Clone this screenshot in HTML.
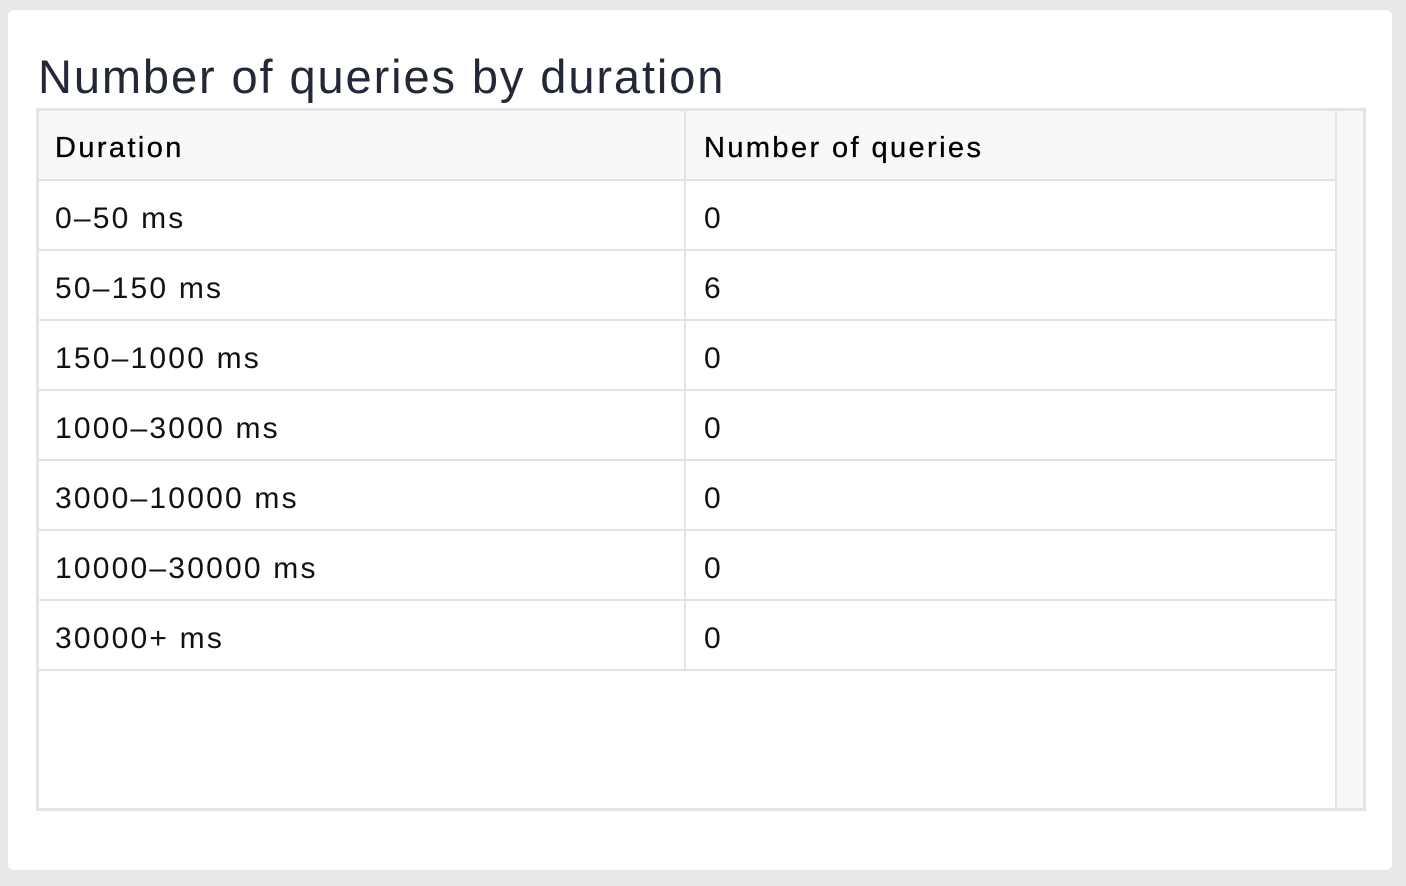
<!DOCTYPE html>
<html><head><style>
body{margin:0;width:1406px;height:886px;background:#e8e8e8;font-family:"Liberation Sans",sans-serif;overflow:hidden}
.card{position:absolute;left:8px;top:10px;width:1384px;height:860px;background:#fff;border-radius:6px}
h1{position:absolute;left:38px;top:50px;margin:0;font-weight:400;font-size:47px;letter-spacing:1.9px;color:#222838;line-height:54px}
.tbl{position:absolute;left:36px;top:108px;width:1324px;height:697px;border:3px solid #e2e4e7;background:#fff}
.scr{position:absolute;right:0;top:0;width:26px;height:100%;background:#f8f8f8;border-left:2px solid #e4e4e4}
.row{position:absolute;left:0;width:1296px;height:68px;border-bottom:2px solid #e2e2e2;background:#fff}
.row.h{background:#f8f8f8}
.c{position:absolute;top:0;height:68px;line-height:75px;font-size:30px;letter-spacing:2.2px;color:#111;padding-left:16px;box-sizing:border-box}
.c1{left:0;width:647px;border-right:2px solid #e4e4e4}
.c2{left:649px;width:647px}
.h .c{font-size:29px;letter-spacing:2.4px;color:#000;-webkit-text-stroke:0.3px #000}
</style></head><body>
<div class="card"></div>
<h1>Number of queries by duration</h1>
<div class="tbl">
<div class="scr"></div>
<div class="row h" style="top:0"><div class="c c1">Duration</div><div class="c c2">Number of queries</div></div>
<div class="row" style="top:70px"><div class="c c1">0–50 ms</div><div class="c c2">0</div></div>
<div class="row" style="top:140px"><div class="c c1">50–150 ms</div><div class="c c2">6</div></div>
<div class="row" style="top:210px"><div class="c c1">150–1000 ms</div><div class="c c2">0</div></div>
<div class="row" style="top:280px"><div class="c c1">1000–3000 ms</div><div class="c c2">0</div></div>
<div class="row" style="top:350px"><div class="c c1">3000–10000 ms</div><div class="c c2">0</div></div>
<div class="row" style="top:420px"><div class="c c1">10000–30000 ms</div><div class="c c2">0</div></div>
<div class="row" style="top:490px"><div class="c c1">30000+ ms</div><div class="c c2">0</div></div>
</div>
</body></html>
